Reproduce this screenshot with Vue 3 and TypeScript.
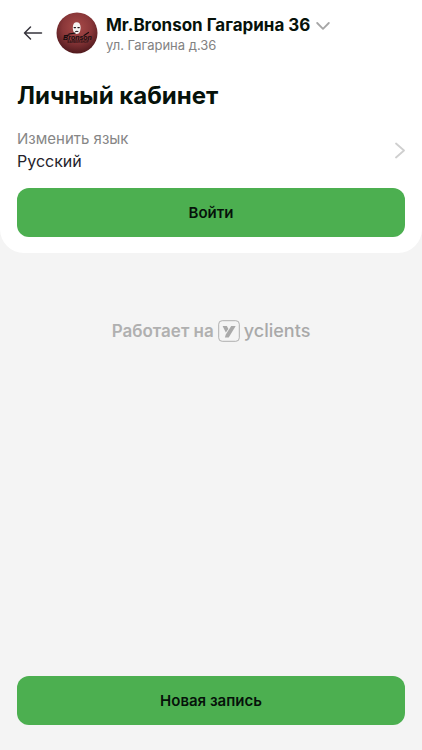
<script setup lang="ts">
import { ref } from 'vue'

interface Branch {
  name: string
  address: string
}

const branch = ref<Branch>({ name: 'Mr.Bronson Гагарина 36', address: 'ул. Гагарина д.36' })
const language = ref('Русский')
</script>

<template>
  <div class="page">
    <main class="card">
      <header class="header">
        <button class="back" type="button" aria-label="Назад">
          <svg width="20" height="16" viewBox="0 0 20 16" fill="none" stroke="#36343c" stroke-width="1.5" stroke-linecap="round" stroke-linejoin="round">
            <path d="M18.5 8H1.5M7.5 2L1.5 8l6 6" />
          </svg>
        </button>
        <svg class="avatar" width="42" height="42" viewBox="0 0 42 42" aria-hidden="true">
          <defs>
            <radialGradient id="disc" cx="50%" cy="36%" r="64%">
              <stop offset="0" stop-color="#a84a48" />
              <stop offset="0.55" stop-color="#8a3739" />
              <stop offset="1" stop-color="#50191d" />
            </radialGradient>
          </defs>
          <circle cx="21" cy="21" r="20.5" fill="url(#disc)" />
          <path d="M16.800 15.500c0-3.300 1.500-5.200 3.900-5.200s3.900 1.900 3.900 5.200c0 3-1 6.500-3.900 6.500s-3.900-3.500-3.900-6.500z" fill="#f6f4f2" />
          <path d="M17.400 14.900h2.700l-.4 1.300h-1.600zM21.300 14.900h2.700l-.7 1.300h-1.600z" fill="#211a1c" />
          <path d="M18.900 19.200c1.100-.7 2.700-.7 3.700 0l-.5.700h-2.700z" fill="#393032" />
          <path d="M9 23.800l4-.8M13 22l6-.8M28 23.500l4.500-3" stroke="#160d0f" stroke-width="1.200" stroke-linecap="round" fill="none" />
          <text x="21.500" y="27.500" text-anchor="middle" class="avatar-name">Bronson</text>
          <text x="22" y="31" text-anchor="middle" class="avatar-sub">BARBERSHOP</text>
        </svg>
        <button class="branch" type="button">
          <span class="branch-name">
            {{ branch.name }}
            <svg width="14" height="10" viewBox="0 0 14 10" fill="none" stroke="#a6a6a6" stroke-width="1.800" stroke-linecap="round" stroke-linejoin="round">
              <path d="M1.200 3L7 8.800 12.800 3" />
            </svg>
          </span>
          <span class="branch-address">{{ branch.address }}</span>
        </button>
      </header>

      <h1 class="title">Личный кабинет</h1>

      <button class="language" type="button">
        <span class="language-text">
          <span class="language-label">Изменить язык</span>
          <span class="language-value">{{ language }}</span>
        </span>
        <svg width="12" height="18" viewBox="0 0 12 18" fill="none" stroke="#cfcfcf" stroke-width="1.800" stroke-linecap="round" stroke-linejoin="round">
          <path d="M3 2.500l8 7-8 7" />
        </svg>
      </button>

      <button class="primary" type="button">Войти</button>
    </main>

    <a class="powered" href="#">
      <span>Работает на</span>
      <svg width="22" height="22" viewBox="0 0 22 22" aria-hidden="true">
        <rect x="0.700" y="0.700" width="20.600" height="20.600" rx="3.500" fill="none" stroke="#b0b0b0" stroke-width="1" />
        <path d="M4.600 6h4.300l1.500 2.900-2.600 3.500z" fill="#a9a9a9" />
        <path d="M13.200 6h4.500L10.700 17.500H6.900l.9-3z" fill="#a9a9a9" />
      </svg>
      <span class="brand">yclients</span>
    </a>

    <footer class="footer">
      <button class="primary" type="button">Новая запись</button>
    </footer>
  </div>
</template>

<style>
body {
  background: #f4f4f4;
}
</style>

<style scoped>
.page {
  display: flex;
  flex-direction: column;
  min-height: 100vh;
  background: #f4f4f4;
  font-family: Inter, "Liberation Sans", sans-serif;
  color: #06120a;
}

button {
  border: 0;
  padding: 0;
  background: none;
  color: inherit;
  font: inherit;
  text-align: left;
  cursor: pointer;
}

svg {
  display: block;
  flex: none;
}

.card {
  display: flex;
  flex-direction: column;
  padding: 12px 17px 16px;
  border-radius: 0 0 24px 24px;
  background: #fff;
}

.header {
  display: flex;
  align-items: center;
}

.back {
  padding: 8px 13px 8px 6px;
}

.avatar-name {
  font: italic 700 7px "Liberation Sans", sans-serif;
  fill: #160d0f;
}

.avatar-sub {
  font: 700 3px "Liberation Sans", sans-serif;
  fill: #2b1012;
}

.branch {
  display: flex;
  flex-direction: column;
  margin-left: 8px;
}

.branch-name {
  display: flex;
  align-items: center;
  gap: 6px;
  font-size: 17px;
  font-weight: 700;
  line-height: 24px;
}

.branch-address {
  font-size: 13px;
  line-height: 16px;
  color: #828282;
}

.title {
  margin: 26px 0 15px;
  font-size: 24px;
  font-weight: 700;
  line-height: 32px;
}

.language {
  display: flex;
  align-items: center;
  justify-content: space-between;
}

.language-text {
  display: flex;
  flex-direction: column;
  line-height: 23px;
}

.language-label {
  font-size: 15px;
  color: #868686;
}

.language-value {
  font-size: 16px;
  color: #24232b;
}

.primary {
  width: 100%;
  height: 49px;
  border-radius: 12px;
  background: #4caf50;
  color: #06120a;
  font-size: 15px;
  font-weight: 600;
  text-align: center;
}

.card .primary {
  margin-top: 15px;
}

.powered {
  display: flex;
  align-items: center;
  justify-content: center;
  gap: 4px;
  margin-top: 67px;
  font-size: 17px;
  font-weight: 600;
  line-height: 22px;
  color: #b0b0b0;
  text-decoration: none;
}

.brand {
  font-size: 18px;
  font-weight: 500;
  color: #a9a9a9;
}

.footer {
  margin-top: auto;
  padding: 16px 17px 25px;
}
</style>
